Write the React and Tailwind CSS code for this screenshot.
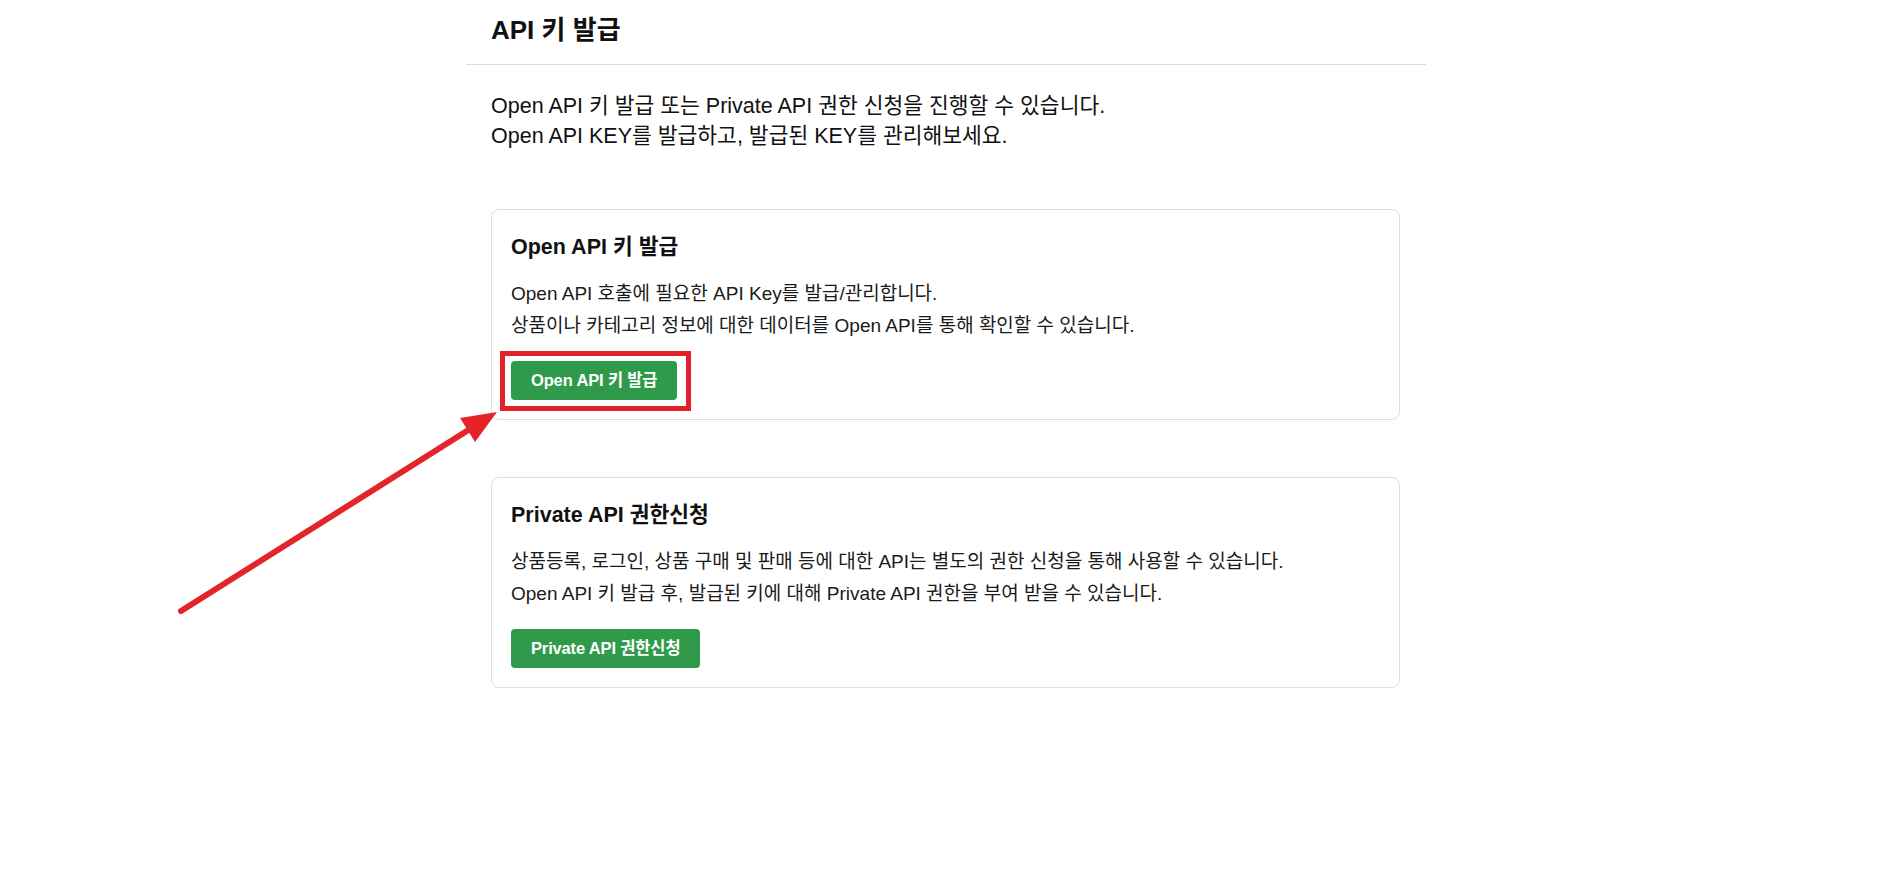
const font = { fontFamily: '"Liberation Sans", "Noto Sans CJK KR", sans-serif' };

const ApiCard = ({ title, lines, button, highlight }) => {
  return (
    <div className="rounded-lg border border-[#dedede] bg-white px-[19px] pt-[22px] pb-[19px]">
      <h3 className="text-[21.5px] font-bold leading-[30px] text-[#111]">{title}</h3>
      <div className="mt-[16px] text-[19px] leading-[32px] text-[#1a1a1a]">
        {lines.map((line) => (
          <p key={line}>{line}</p>
        ))}
      </div>
      <div className="relative mt-[19px] inline-block align-top">
        <button className="h-[39px] rounded-[4px] bg-[#2f9b4a] px-[20px] text-[16.5px] font-bold tracking-[-0.15px] text-white">
          {button}
        </button>
        {highlight && (
          <span className="pointer-events-none absolute -top-[10px] -bottom-[11px] -left-[11px] -right-[14px] border-[5px] border-[#e3212b]" />
        )}
      </div>
    </div>
  );
};

export default function App() {
  return (
    <div className="relative min-h-[891px] w-full bg-white" style={font}>
      <div className="flex justify-center pr-[4px]">
        <div className="w-[960px]">
          <div className="border-b border-[#dcdcdc] px-[25px] pt-[12px] pb-[16px]">
            <h1 className="text-[26px] font-bold leading-[36px] text-[#111]">API 키 발급</h1>
          </div>

          <div className="px-[25px]">
            <div className="mt-[26px] text-[21.5px] leading-[30px] text-[#111]">
              <p>Open API 키 발급 또는 Private API 권한 신청을 진행할 수 있습니다.</p>
              <p>Open API KEY를 발급하고, 발급된 KEY를 관리해보세요.</p>
            </div>

            <div className="mt-[58px] mr-[1px]">
              <ApiCard
                title="Open API 키 발급"
                lines={[
                  'Open API 호출에 필요한 API Key를 발급/관리합니다.',
                  '상품이나 카테고리 정보에 대한 데이터를 Open API를 통해 확인할 수 있습니다.',
                ]}
                button="Open API 키 발급"
                highlight
              />
            </div>

            <div className="mt-[57px] mr-[1px]">
              <ApiCard
                title="Private API 권한신청"
                lines={[
                  '상품등록, 로그인, 상품 구매 및 판매 등에 대한 API는 별도의 권한 신청을 통해 사용할 수 있습니다.',
                  'Open API 키 발급 후, 발급된 키에 대해 Private API 권한을 부여 받을 수 있습니다.',
                ]}
                button="Private API 권한신청"
              />
            </div>
          </div>
        </div>
      </div>

      {/* annotation arrow */}
      <svg
        className="pointer-events-none absolute left-0 top-0"
        width="1896"
        height="891"
        viewBox="0 0 1896 891"
      >
        <line x1="181" y1="611" x2="470" y2="429" stroke="#e3242b" strokeWidth="6" strokeLinecap="round" />
        <polygon points="497,412 475,442 460,418" fill="#e3242b" />
      </svg>
    </div>
  );
}
